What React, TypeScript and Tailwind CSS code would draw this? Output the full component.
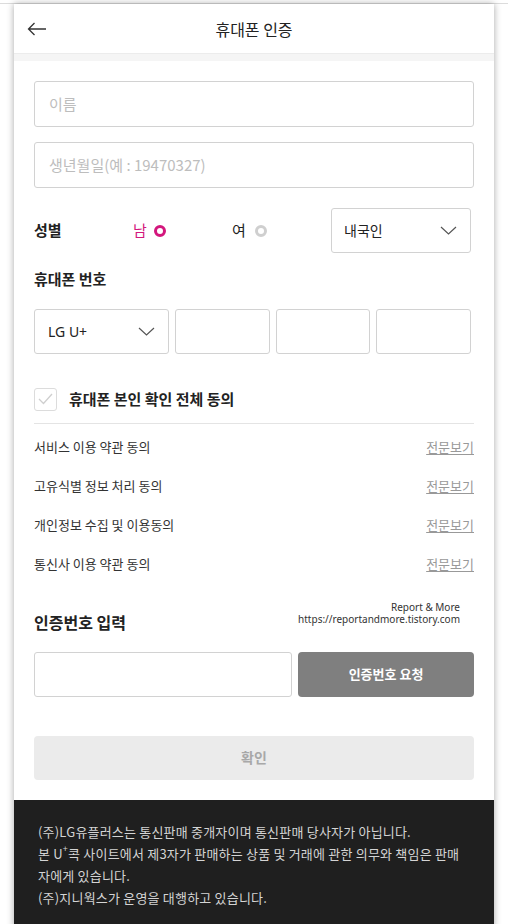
import React from 'react';

const TERMS = [
  '서비스 이용 약관 동의',
  '고유식별 정보 처리 동의',
  '개인정보 수집 및 이용동의',
  '통신사 이용 약관 동의',
];

const Chevron = () => (
  <svg width="17" height="9" viewBox="0 0 17 9" fill="none">
    <path d="M1 1l7.5 7L16 1" stroke="#555" strokeWidth="1.2" />
  </svg>
);

export default function App() {
  return (
    <div className="min-h-screen bg-white pt-[3px] font-['Noto_Sans_CJK_KR','Noto_Sans',sans-serif] text-[#222]">
      <div className="border-t border-[#dcdcdc]" />
      <div className="mx-auto w-[480px] bg-white shadow-[0_0_7px_rgba(0,0,0,0.35)]">
        {/* header */}
        <div className="relative flex h-[49px] items-center justify-center">
          <svg className="absolute left-[13px] top-[18px]" width="20" height="14" viewBox="0 0 20 14" fill="none">
            <path d="M19 7H1.5M7.5 1L1.5 7l6 6" stroke="#333" strokeWidth="1.3" />
          </svg>
          <span className="text-[16px] text-[#222]">휴대폰 인증</span>
        </div>
        <div className="h-[8px] border-t border-[#ececec] bg-[#f5f5f5]" />

        <div className="px-5 pt-5">
          <div className="flex h-[46px] items-center rounded-[3px] border border-[#d2d2d2] px-[14px] text-[15px] text-[#bdbdbd]">
            이름
          </div>
          <div className="mt-[15px] flex h-[46px] items-center rounded-[3px] border border-[#d2d2d2] px-[14px] text-[15px] text-[#bdbdbd]">
            생년월일(예 : 19470327)
          </div>

          {/* gender */}
          <div className="mt-[20px] flex h-[45px] items-center">
            <span className="w-[99px] text-[15px] font-bold">성별</span>
            <span className="flex w-[99px] items-center gap-[7px] text-[15px] text-[#d3177d]">
              남
              <span className="h-[12px] w-[12px] rounded-full border-[3px] border-[#d3177d] bg-white" />
            </span>
            <span className="flex items-center gap-[9px] text-[15px]">
              여
              <span className="h-[12px] w-[12px] rounded-full border-[3px] border-[#cfcfcf] bg-white" />
            </span>
            <div className="ml-auto mr-[3px] flex h-[45px] w-[140px] items-center justify-between rounded-[3px] border border-[#d2d2d2] pl-[12px] pr-[13px] text-[14px]">
              내국인
              <Chevron />
            </div>
          </div>

          {/* phone */}
          <div className="mt-[15px] text-[15px] font-bold">휴대폰 번호</div>
          <div className="mt-[18px] flex h-[45px] gap-[6px] pr-[3px]">
            <div className="flex w-[135px] items-center justify-between rounded-[3px] border border-[#d2d2d2] pl-[13px] pr-[13px] font-['Noto_Sans',sans-serif] text-[14px]">
              LG U+
              <Chevron />
            </div>
            <div className="flex-1 rounded-[3px] border border-[#d2d2d2]" />
            <div className="flex-1 rounded-[3px] border border-[#d2d2d2]" />
            <div className="flex-1 rounded-[3px] border border-[#d2d2d2]" />
          </div>

          {/* agree all */}
          <div className="mt-[34px] flex items-center gap-[12px]">
            <span className="flex h-[23px] w-[23px] items-center justify-center rounded-[3px] border border-[#dcdcdc]">
              <svg width="15" height="12" viewBox="0 0 15 12" fill="none">
                <path d="M1 6l4.5 4.5L14 1" stroke="#cfcfcf" strokeWidth="1.3" />
              </svg>
            </span>
            <span className="text-[15px] font-bold">휴대폰 본인 확인 전체 동의</span>
          </div>
          <div className="mt-[12px] border-t border-[#e4e4e4]" />

          <div className="pt-[4px]">
            {TERMS.map(t => (
              <div key={t} className="flex h-[39px] items-center justify-between text-[13px] text-[#333]">
                <span>{t}</span>
                <span className="text-[#999] underline underline-offset-2">전문보기</span>
              </div>
            ))}
          </div>

          {/* auth number */}
          <div className="mt-[17px] flex items-end justify-between">
            <span className="text-[16px] font-bold">인증번호 입력</span>
            <div className="mb-[9px] mr-[14px] text-right font-['Noto_Sans',sans-serif] text-[10px] leading-[12px] text-[#333]">
              <div>Report &amp; More</div>
              <div>https://reportandmore.tistory.com</div>
            </div>
          </div>
          <div className="mt-[18px] flex h-[45px] gap-[6px]">
            <div className="flex-1 rounded-[3px] border border-[#d2d2d2]" />
            <div className="flex w-[176px] items-center justify-center rounded-[4px] bg-[#7f7f7f] text-[13px] font-bold text-white">
              인증번호 요청
            </div>
          </div>

          <div className="mt-[39px] flex h-[44px] items-center justify-center rounded-[4px] bg-[#ebebeb] text-[14px] font-bold text-[#a8a8a8]">
            확인
          </div>
        </div>

        {/* footer */}
        <div className="mt-[20px] bg-[#1f1f1f] pb-[20px] pl-[24px] pr-[28px] pt-[21px] text-[13px] leading-[22px] tracking-[0.2px] text-[#d4d4d4]">
          <p>(주)LG유플러스는 통신판매 중개자이며 통신판매 당사자가 아닙니다.</p>
          <p>
            본 U<span className="inline-block align-top text-[9px] leading-[12px]">+</span>콕 사이트에서 제3자가 판매하는 상품 및 거래에 관한 의무와 책임은 판매자에게 있습니다.
          </p>
          <p>(주)지니웍스가 운영을 대행하고 있습니다.</p>
        </div>
      </div>
    </div>
  );
}
